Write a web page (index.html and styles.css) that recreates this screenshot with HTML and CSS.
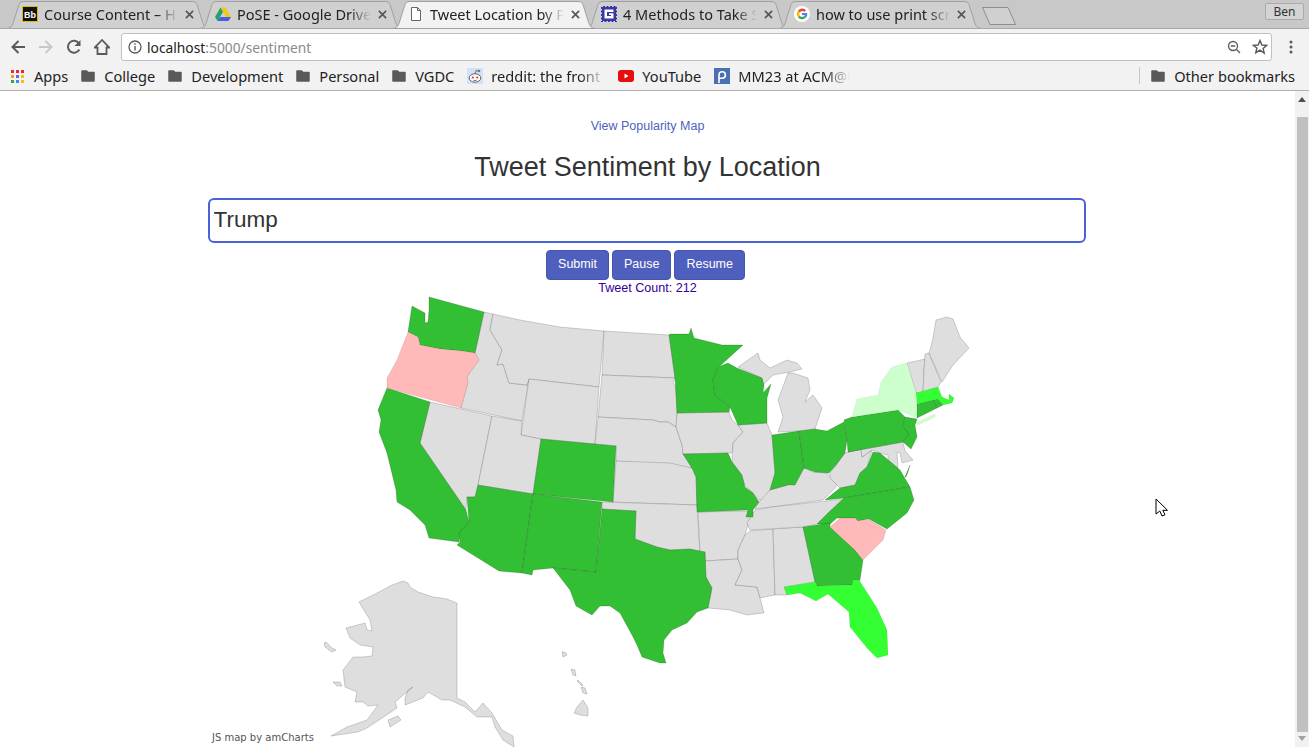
FILE: index.html
```html
<!DOCTYPE html>
<html lang="en">
<head>
    <meta charset="UTF-8">
    <title>Tweet Sentiment by Location</title>
    <link rel="stylesheet" href="styles.css">
</head>
<body>
    <div class="tabstrip">
        <div class="tab">
            <svg class="tabshape" viewBox="0 0 204 28"><path d="M0 28C4 28 6 26 7 23L13 4Q14 1 17 1H187Q190 1 191 4L197 23C198 26 200 28 204 28Z"/></svg>
            <svg class="favicon" viewBox="0 0 16 16"><rect x=".5" y=".5" width="15" height="15" fill="#111" stroke="#e6b800"/><text x="8" y="12" class="bb">Bb</text></svg>
            <span class="tabtitle">Course Content – H</span>
            <svg class="tabclose" viewBox="0 0 10 10"><path d="M1 1 9 9M9 1 1 9"/></svg>
        </div>
        <div class="tab">
            <svg class="tabshape" viewBox="0 0 204 28"><path d="M0 28C4 28 6 26 7 23L13 4Q14 1 17 1H187Q190 1 191 4L197 23C198 26 200 28 204 28Z"/></svg>
            <svg class="favicon" viewBox="0 0 16 16"><path d="M5.500 1.500h5L16 11h-5z" fill="#f5c518"/><path d="M5.500 1.500 0 11l2.500 4L8 6z" fill="#1fa463"/><path d="M2.500 15h11l2.500-4H5z" fill="#4a5fe0"/></svg>
            <span class="tabtitle">PoSE - Google Drive</span>
            <svg class="tabclose" viewBox="0 0 10 10"><path d="M1 1 9 9M9 1 1 9"/></svg>
        </div>
        <div class="tab active">
            <svg class="tabshape" viewBox="0 0 204 28"><path d="M0 28C4 28 6 26 7 23L13 4Q14 1 17 1H187Q190 1 191 4L197 23C198 26 200 28 204 28Z"/></svg>
            <svg class="favicon" viewBox="0 0 16 16"><path d="M3.500 1.500h6l3 3v10h-9z" fill="#fff" stroke="#666"/><path d="M9.500 1.500v3h3" fill="none" stroke="#666"/></svg>
            <span class="tabtitle">Tweet Location by P</span>
            <svg class="tabclose" viewBox="0 0 10 10"><path d="M1 1 9 9M9 1 1 9"/></svg>
        </div>
        <div class="tab">
            <svg class="tabshape" viewBox="0 0 204 28"><path d="M0 28C4 28 6 26 7 23L13 4Q14 1 17 1H187Q190 1 191 4L197 23C198 26 200 28 204 28Z"/></svg>
            <svg class="favicon" viewBox="0 0 16 16"><rect width="16" height="16" fill="#3a37a0"/><rect x=".5" y=".5" width="15" height="15" fill="none" stroke="#d8d8e8" stroke-dasharray="1.500 2"/><path d="M3.500 3.500h9v2.500H6v4h4V9H8V7.300h4.500v5.200h-9z" fill="#fff"/></svg>
            <span class="tabtitle">4 Methods to Take S</span>
            <svg class="tabclose" viewBox="0 0 10 10"><path d="M1 1 9 9M9 1 1 9"/></svg>
        </div>
        <div class="tab">
            <svg class="tabshape" viewBox="0 0 204 28"><path d="M0 28C4 28 6 26 7 23L13 4Q14 1 17 1H187Q190 1 191 4L197 23C198 26 200 28 204 28Z"/></svg>
            <svg class="favicon" viewBox="0 0 16 16"><circle cx="8" cy="8" r="8" fill="#fff"/><path d="M12 4.200A5.200 5.200 0 0 0 4 4.800L5.800 6.400A3 3 0 0 1 10.300 5.900z" fill="#ea4335"/><path d="M4 4.800a5.200 5.200 0 0 0 0 6.400l1.800-1.500a3 3 0 0 1 0-3.300z" fill="#fbbc05"/><path d="M4 11.200a5.200 5.200 0 0 0 7.800.6L10 10.300a3 3 0 0 1-4.200-.6z" fill="#34a853"/><path d="M8 7v2h2.900a3 3 0 0 1-.9 1.300l1.800 1.500A5.300 5.300 0 0 0 13.200 7z" fill="#4285f4"/></svg>
            <span class="tabtitle">how to use print scr</span>
            <svg class="tabclose" viewBox="0 0 10 10"><path d="M1 1 9 9M9 1 1 9"/></svg>
        </div>
        <svg class="newtab" viewBox="0 0 34 18"><path d="M.5.500H26L33.500 17.500H8z"/></svg>
        <div class="profile">Ben</div>
    </div>

    <div class="toolbar">
        <svg class="navicon" viewBox="0 0 16 16"><path d="M15 8H2.500M8.500 2l-6 6 6 6" class="navstroke"/></svg>
        <svg class="navicon" viewBox="0 0 16 16"><path d="M1 8h12.500M7.500 2l6 6-6 6" class="navstroke faint"/></svg>
        <svg class="navicon" viewBox="0 0 16 16"><path d="M13.300 10.500A6 6 0 1 1 13 4.500" class="navstroke"/><path d="M14.500 1v6h-6z" fill="#5a5a5a"/></svg>
        <svg class="navicon" viewBox="0 0 16 16"><path d="M8 1 .8 8.500h2.700V15h9V8.500h2.700z" class="navstroke thin"/></svg>
        <div class="omnibox">
            <svg class="infoicon" viewBox="0 0 14 14"><circle cx="7" cy="7" r="6" fill="none" stroke="#5a5a5a" stroke-width="1.300"/><path d="M6.300 6h1.400v4.500H6.300zM6.300 3.300h1.400v1.400H6.300z" fill="#5a5a5a"/></svg>
            <span class="urlhost">localhost</span><span class="urlrest">:5000/sentiment</span>
            <svg class="zoomicon" viewBox="0 0 14 14"><circle cx="6" cy="6" r="4.500" fill="none" stroke="#5a5a5a" stroke-width="1.300"/><path d="M9.300 9.300 13 13M3.800 6h4.400" stroke="#5a5a5a" stroke-width="1.300" fill="none"/></svg>
            <svg class="staricon" viewBox="0 0 16 16"><path d="M8 1.500l1.900 4.500 4.800.4-3.600 3.100 1.100 4.700L8 11.200l-4.200 2.500 1.100-4.700L1.300 6.400l4.800-.4z" fill="none" stroke="#5a5a5a" stroke-width="1.400"/></svg>
        </div>
        <svg class="kebab" viewBox="0 0 4 14"><circle cx="2" cy="2" r="1.500"/><circle cx="2" cy="7" r="1.500"/><circle cx="2" cy="12" r="1.500"/></svg>
    </div>

    <div class="bookmarks">
        <div class="bm apps">
            <svg class="bmicon" viewBox="0 0 14 14">
                <rect x="1" y="1" width="3" height="3" fill="#ea2a2a"/><rect x="6" y="1" width="3" height="3" fill="#ea2a2a"/><rect x="11" y="1" width="3" height="3" fill="#ea2a2a"/>
                <rect x="1" y="6" width="3" height="3" fill="#f4a400"/><rect x="6" y="6" width="3" height="3" fill="#6a5fe0"/><rect x="11" y="6" width="3" height="3" fill="#f4c400"/>
                <rect x="1" y="11" width="3" height="3" fill="#2fa84f"/><rect x="6" y="11" width="3" height="3" fill="#4285f4"/><rect x="11" y="11" width="3" height="3" fill="#f4c400"/>
            </svg>
            <span>Apps</span>
        </div>
        <div class="bm"><svg class="bmicon" viewBox="0 0 14 14"><path class="folder" d="M1 2h4.500L7 3.500h6V12H1z"/></svg><span>College</span></div>
        <div class="bm"><svg class="bmicon" viewBox="0 0 14 14"><path class="folder" d="M1 2h4.500L7 3.500h6V12H1z"/></svg><span>Development</span></div>
        <div class="bm"><svg class="bmicon" viewBox="0 0 14 14"><path class="folder" d="M1 2h4.500L7 3.500h6V12H1z"/></svg><span>Personal</span></div>
        <div class="bm"><svg class="bmicon" viewBox="0 0 14 14"><path class="folder" d="M1 2h4.500L7 3.500h6V12H1z"/></svg><span>VGDC</span></div>
        <div class="bm reddit">
            <svg class="bmicon wide" viewBox="0 0 16 16"><rect width="16" height="16" fill="#cfe2f7"/><ellipse cx="8" cy="10" rx="5.800" ry="4.200" fill="#fff" stroke="#555" stroke-width=".9"/><circle cx="5.800" cy="9.500" r="1.100" fill="#e8301a"/><circle cx="10.200" cy="9.500" r="1.100" fill="#e8301a"/><path d="M8 6 9 2.500l2.500.6" fill="none" stroke="#555" stroke-width=".8"/><circle cx="12" cy="3" r="1.300" fill="#777"/><path d="M6 12.200q2 1 4 0" fill="none" stroke="#555" stroke-width=".7"/></svg>
            <span class="fade">reddit: the front</span>
        </div>
        <div class="bm"><svg class="bmicon wide" viewBox="0 0 16 16"><rect y="2" width="16" height="12" rx="3" fill="#e60d0d"/><path d="M6.500 5.500v5l4-2.500z" fill="#fff"/></svg><span>YouTube</span></div>
        <div class="bm mm23">
            <svg class="bmicon wide" viewBox="0 0 16 16"><rect width="16" height="16" fill="#4a6fb5"/><path d="M5 15V7a3.200 3.200 0 1 1 3.200 3.200H5.500" fill="none" stroke="#fff" stroke-width="1.600"/></svg>
            <span class="fade">MM23 at ACM@U</span>
        </div>
        <div class="bmsep"></div>
        <div class="bm other"><svg class="bmicon" viewBox="0 0 14 14"><path class="folder" d="M1 2h4.500L7 3.500h6V12H1z"/></svg><span>Other bookmarks</span></div>
    </div>

    <div class="viewport">
        <div class="content">
            <a class="maplink" href="#">View Popularity Map</a>
            <h1>Tweet Sentiment by Location</h1>
            <input class="search" type="text" value="Trump">
            <div class="actions">
                <button>Submit</button>
                <button>Pause</button>
                <button>Resume</button>
            </div>
            <div class="count">Tweet Count: 212</div>
            <svg class="usmap" viewBox="0 295 1295 452">
                <!-- grey states -->
                <g class="none">
                    <polygon points="430,402 492,416 478,485 475,497 467,497 466,510 420,443"/>
                    <polygon points="484,312 493,314 490,330 502,350 497,365 503,364 509,383 527,385 529,379 522,421 461,408 468,382 467,378 468,375 479,360 475,353"/>
                    <polygon points="493,314 520,320 560,327 604,331 599,387 529,379 527,385 509,383 503,364 497,365 502,350 490,330"/>
                    <polygon points="529,379 599,387 595,444 541,439 521,435"/>
                    <polygon points="492,416 522,421 521,435 541,439 533,494 478,485"/>
                    <polygon points="604,331 669,335 675,378 602,375"/>
                    <polygon points="602,375 675,378 673,383 676,387 677,413 676,427 668,422 660,422 653,420 598,417"/>
                    <polygon points="598,417 653,420 660,422 668,422 676,427 682,445 683,454 692,468 616,461 616,446 595,444"/>
                    <polygon points="616,461 670,463 692,468 696,477 697,505 613,502"/>
                    <polygon points="602,502 697,505 698,520 700,552 690,549 670,550 657,547 635,539 636,511 602,509"/>
                    <polygon points="677,413 729,412 732,420 738,425 743,432 733,443 732,453 728,453 683,454 682,445 676,427"/>
                    <polygon points="698,512 749,511 747,516 753,517 748,525 745,535 738,550 738,559 705,561 705,552 700,552"/>
                    <polygon points="705,561 738,559 742,570 735,585 757,587 760,598 764,613 747,615 730,610 708,608 712,588 706,577"/>
                    <polygon points="750,531 773,529 775,595 760,598 757,587 735,585 742,570 738,559 738,550 745,535"/>
                    <polygon points="773,529 803,527 815,582 784,587 787,595 775,595"/>
                    <polygon points="738,425 767,423 772,435 775,473 770,490 767,500 759,500 753,493 745,485 740,473 732,462 733,443 743,432"/>
                    <polygon points="755,509 759,502 770,490 788,485 805,468 813,472 827,473 837,485 835,488 823,500 772,507"/>
                    <polygon points="844,499 828,513 817,524 802,527 750,530 747,523 755,510 772,507 817,502"/>
                    <polygon points="830,473 836,465 845,453 848,452 861,449 862,457 872,450 867,467 860,473 855,485 840,488 830,478"/>
                    <polygon points="738,367 758,353 760,360 770,368 787,360 797,363 802,369 790,372 773,375 763,385 762,378"/>
                    <polygon points="778,432 783,417 778,400 788,373 793,373 808,378 810,390 805,402 813,395 822,408 815,429 799,431"/>
                    <polygon points="848,452 903,442 905,451 913,460 902,463 900,453 897,452 898,468 888,463 888,455 880,453 872,450 862,457 861,449"/>
                    <polygon points="907,363 925,359 924,370 923,392 916,393"/>
                    <polygon points="925,354 929,353 941,382 938,387 923,392 924,370"/>
                    <polygon points="929,353 932,343 936,320 947,317 953,319 960,337 969,348 953,365 942,382"/>
                </g>
                <!-- strong positive -->
                <g class="pos">
                    <polygon points="429,297 484,312 475,353 462,351 440,349 420,345 418,337 408,332 412,306 425,313 425,323 428,322 429,310"/>
                    <polygon points="387,388 430,402 420,443 466,510 469,522 460,533 459,542 429,538 425,525 410,510 397,502 396,490 387,453 379,432 381,420 378,410"/>
                    <polygon points="478,485 533,494 522,573 499,571 457,545 460,542 459,533 469,522 467,497 475,497"/>
                    <polygon points="541,439 616,446 613,502 533,494"/>
                    <polygon points="533,494 602,502 596,572 553,568 533,570 532,575 522,573"/>
                    <polygon points="602,509 636,511 635,539 657,547 670,550 690,549 705,552 706,577 712,588 708,608 697,612 687,623 672,630 664,640 663,653 666,663 660,663 642,657 637,645 632,635 620,613 610,606 600,606 592,615 576,606 570,590 553,568 596,572"/>
                    <polygon points="683,454 728,453 732,462 742,475 745,487 753,493 759,502 753,510 753,517 746,517 748,510 697,512 696,477 692,468"/>
                    <polygon points="670,334 689,334 691,328 694,338 722,345 743,345 721,365 718,367 713,380 715,395 730,407 729,412 677,413 675,378 669,335"/>
                    <polygon points="718,367 728,363 737,368 762,378 764,385 763,393 771,384 767,398 767,423 738,425 730,407 715,395 713,380"/>
                    <polygon points="772,435 799,431 804,468 795,485 788,485 770,490 775,473"/>
                    <polygon points="799,431 815,429 827,431 844,422 847,440 845,453 836,465 829,473 815,472 804,468"/>
                    <polygon points="844,420 852,417 898,410 905,417 903,427 910,433 903,442 848,452 847,440"/>
                    <polygon points="905,417 917,419 915,425 917,437 911,449 903,442 909,434 903,427"/>
                    <polygon points="910,487 900,470 892,463 880,453 873,452 867,467 860,473 855,485 840,488 825,500 844,498"/>
                    <polygon points="905,477 910,465 908,472 906,477"/>
                    <polygon points="910,487 914,500 907,513 887,529 869,519 858,521 855,518 837,518 829,525 817,524 828,513 844,498"/>
                    <polygon points="803,527 830,523 830,527 855,550 863,560 860,580 853,585 817,586 815,582"/>
                    <polygon points="917,404 933,400 937,408 917,418"/>
                    <polygon points="933,400 938,399 943,405 937,408"/>
                </g>
                <!-- brightest positive -->
                <g class="top">
                    <polygon points="784,587 815,582 817,586 852,585 853,580 859,580 877,608 887,630 888,655 877,658 867,648 850,627 849,612 828,594 816,601 800,593 787,595"/>
                    <polygon points="916,393 938,387 942,397 949,400 949,394 954,398 952,403 943,405 938,399 917,404"/>
                </g>
                <!-- negative -->
                <g class="neg">
                    <polygon points="408,332 418,337 420,345 440,349 462,351 475,353 479,360 468,375 467,378 468,382 461,408 387,388 387,378 397,360"/>
                    <polygon points="830,527 840,518 855,518 858,521 868,519 886,530 883,540 863,560 855,550"/>
                </g>
                <!-- slightly positive -->
                <g class="mild">
                    <polygon points="852,417 857,399 878,395 881,382 892,367 907,363 916,393 917,418 898,410"/>
                    <polygon points="916,423 935,414 935,417 918,425"/>
                </g>
                <!-- alaska and hawaii -->
                <g class="none">
                    <polygon points="359,602 377,593 392,585 403,581 408,583 410,587 418,592 433,597 447,599 457,603 457,698 465,702 475,712 483,703 492,713 502,730 513,736 514,747 503,740 495,727 492,717 477,717 465,707 450,700 442,700 428,692 423,698 405,705 405,698 408,690 413,687 395,702 397,708 382,718 367,728 358,732 331,736 347,727 367,720 378,705 368,706 363,702 355,702 357,692 345,687 343,670 353,657 363,657 372,656 373,647 360,645 350,638 346,628 365,623 367,630 372,631 370,620"/>
                    <polygon points="324,643 326,642 332,648 336,650 332,652 325,647"/>
                    <polygon points="333,682 340,682 342,686 337,686"/>
                    <polygon points="388,720 398,716 401,720 390,727"/>
                    <polygon points="562,652 565,652 567,655 563,657"/>
                    <polygon points="571,669 575,670 576,676 573,675"/>
                    <polygon points="578,680 583,685 582,686 577,681"/>
                    <polygon points="581,687 585,688 587,694 583,693"/>
                    <polygon points="583,700 588,708 588,716 580,715 574,713 577,707"/>
                </g>
                <text class="credit" x="212" y="741">JS map by amCharts</text>
            </svg>
        </div>
        <div class="scrollbar">
            <svg class="arrow up" viewBox="0 0 8 5"><path d="M4 0 8 5H0z" fill="#505050"/></svg>
            <div class="thumb"></div>
            <svg class="arrow down" viewBox="0 0 8 5"><path d="M0 0H8L4 5z" fill="#a0a0a0"/></svg>
        </div>
        <svg class="cursor" viewBox="0 0 13 19"><path d="M1 1V16L4.800 13 7 18 10 16.800 7.800 12.300H12.500z" fill="#fff" stroke="#000"/></svg>
    </div>
</body>
</html>
```

FILE: styles.css
```css
html, body { height: 100%; margin: 0; overflow: hidden; background: #fff; }
body { display: flex; flex-direction: column; font-family: "Noto Sans", sans-serif; }

/* browser chrome */
.tabstrip { display: flex; align-items: flex-start; height: 28px; padding-left: 6px; background: #c8c8c8; flex: none; position: relative; }
.tab { position: relative; display: flex; align-items: center; width: 204px; height: 28px; margin-right: -11px; flex: none; font-size: 14.500px; color: #222; }
.tab.active { z-index: 2; }
.tabshape { position: absolute; left: 0; top: 0; width: 204px; height: 29px; }
.tabshape path { fill: #d0d0d0; stroke: #a0a0a0; stroke-width: 1; }
.active .tabshape path { fill: #f2f2f2; }
.favicon { position: relative; width: 16px; height: 16px; margin-left: 16px; flex: none; }
.bb { font: bold 9px "Liberation Sans", sans-serif; fill: #fff; text-anchor: middle; }
.tabtitle { position: relative; width: 134px; margin-left: 6px; white-space: nowrap; -webkit-mask-image: linear-gradient(to right, #000 84%, transparent); mask-image: linear-gradient(to right, #000 84%, transparent); }
.tabclose { position: relative; width: 9px; height: 9px; margin-left: 7px; flex: none; }
.tabclose path { fill: none; stroke: #555; stroke-width: 1.800; }
.newtab { width: 34px; height: 18px; margin: 7px 0 0 11px; flex: none; }
.newtab path { fill: #d0d0d0; stroke: #8e8e8e; }
.profile { margin: 3px 5px 0 auto; width: 39px; height: 17px; box-sizing: border-box; border: 1px solid #aaa; border-radius: 2px; background: #d4d4d4; font: 12px/15px "Noto Sans", sans-serif; color: #333; text-align: center; }

.toolbar { display: flex; align-items: center; height: 33px; background: #f2f2f2; border-top: 1px solid #a8a8a8; box-sizing: border-box; padding: 4px 0 0 10px; flex: none; position: relative; z-index: 1; }
.navicon { width: 16px; height: 16px; margin-right: 12px; flex: none; }
.navstroke { fill: none; stroke: #5a5a5a; stroke-width: 2; }
.navstroke.faint { stroke: #c8c8c8; }
.navstroke.thin { stroke-width: 1.800; }
.omnibox { display: flex; align-items: center; width: 1151px; height: 28px; margin-left: -1px; box-sizing: border-box; border: 1px solid #c0c0c0; border-radius: 3px; background: #fff; font-size: 13.800px; }
.infoicon { width: 14px; height: 14px; margin: 0 5px 0 6px; flex: none; }
.urlhost { color: #222; }
.urlrest { color: #8a8a8a; }
.zoomicon { width: 14px; height: 14px; margin-left: auto; flex: none; }
.staricon { width: 16px; height: 16px; margin: 0 3px 0 11px; flex: none; }
.kebab { width: 4px; height: 14px; margin-left: 17px; fill: #5a5a5a; flex: none; }

.bookmarks { display: flex; align-items: center; height: 30px; padding-left: 10px; box-sizing: border-box; background: #f2f2f2; border-bottom: 1px solid #b0b0b0; font-size: 14.600px; color: #222; flex: none; }
.bm { display: flex; align-items: center; margin-right: 13px; white-space: nowrap; flex: none; }
.bmicon { width: 14px; height: 14px; margin-right: 9px; flex: none; }
.apps .bmicon { margin-right: 10px; }
.bmicon.wide { width: 16px; height: 16px; margin-right: 8px; }
.folder { fill: #5a5a5a; stroke: #5a5a5a; stroke-width: 1.500; stroke-linejoin: round; }
.fade { -webkit-mask-image: linear-gradient(to right, #000 78%, transparent); mask-image: linear-gradient(to right, #000 78%, transparent); }
.reddit .fade { width: 114px; }
.mm23 .fade { width: 112px; }
.bmsep { width: 1px; height: 17px; background: #c8c8c8; margin-left: auto; margin-right: 11px; }
.other { margin-right: 14px; }

/* page */
.viewport { position: relative; display: flex; height: 656px; flex: none; }
.content { display: flex; flex-direction: column; align-items: center; width: 1295px; padding-top: 28px; box-sizing: border-box; overflow: hidden; font-family: "Liberation Sans", sans-serif; }
.maplink { font-size: 12.500px; line-height: 14px; color: #4f5fbd; text-decoration: none; }
h1 { margin: 19px 0 0; font-size: 27px; line-height: 30px; font-weight: normal; color: #333; }
.search { width: 878px; height: 45px; margin: 16px 2px 0 0; padding: 0 4px 2px; box-sizing: border-box; border: 2px solid #4a62d8; border-radius: 6px; outline: none; font: 22.500px "Liberation Sans", sans-serif; color: #333; }
.actions { display: flex; gap: 3px; margin: 7px 4px 0 0; }
.actions button { height: 30px; padding: 0 11px 2px; border: 1px solid #4555ad; border-radius: 4px; background: #4f5fbd; color: #fff; font: 12.500px "Liberation Sans", sans-serif; }
.count { margin-top: 1px; font-size: 12.600px; line-height: 14px; color: #330099; }
.usmap { display: block; width: 1295px; height: 452px; flex: none; }
.usmap polygon { stroke: #000; stroke-opacity: .28; stroke-width: .6; stroke-linejoin: round; }
.none polygon { fill: #dedede; }
.pos polygon { fill: #33bf33; }
.top polygon { fill: #33ff33; stroke-opacity: .1; }
.neg polygon { fill: #ffb9b9; stroke-opacity: .15; }
.mild polygon { fill: #ccffcc; stroke-opacity: .08; }
.credit { font: 10px "DejaVu Sans", sans-serif; fill: #555; }

.scrollbar { display: flex; flex-direction: column; align-items: center; width: 14px; background: #f1f1f1; flex: none; }
.arrow { width: 8px; height: 5px; flex: none; }
.arrow.up { margin: 6px 0 15px; }
.arrow.down { margin: 4px 0 6px; }
.thumb { width: 11px; flex: 1; margin-left: 1px; background: #c0c0c0; }
.cursor { position: absolute; left: 1155px; top: 407px; width: 13px; height: 19px; }
```
